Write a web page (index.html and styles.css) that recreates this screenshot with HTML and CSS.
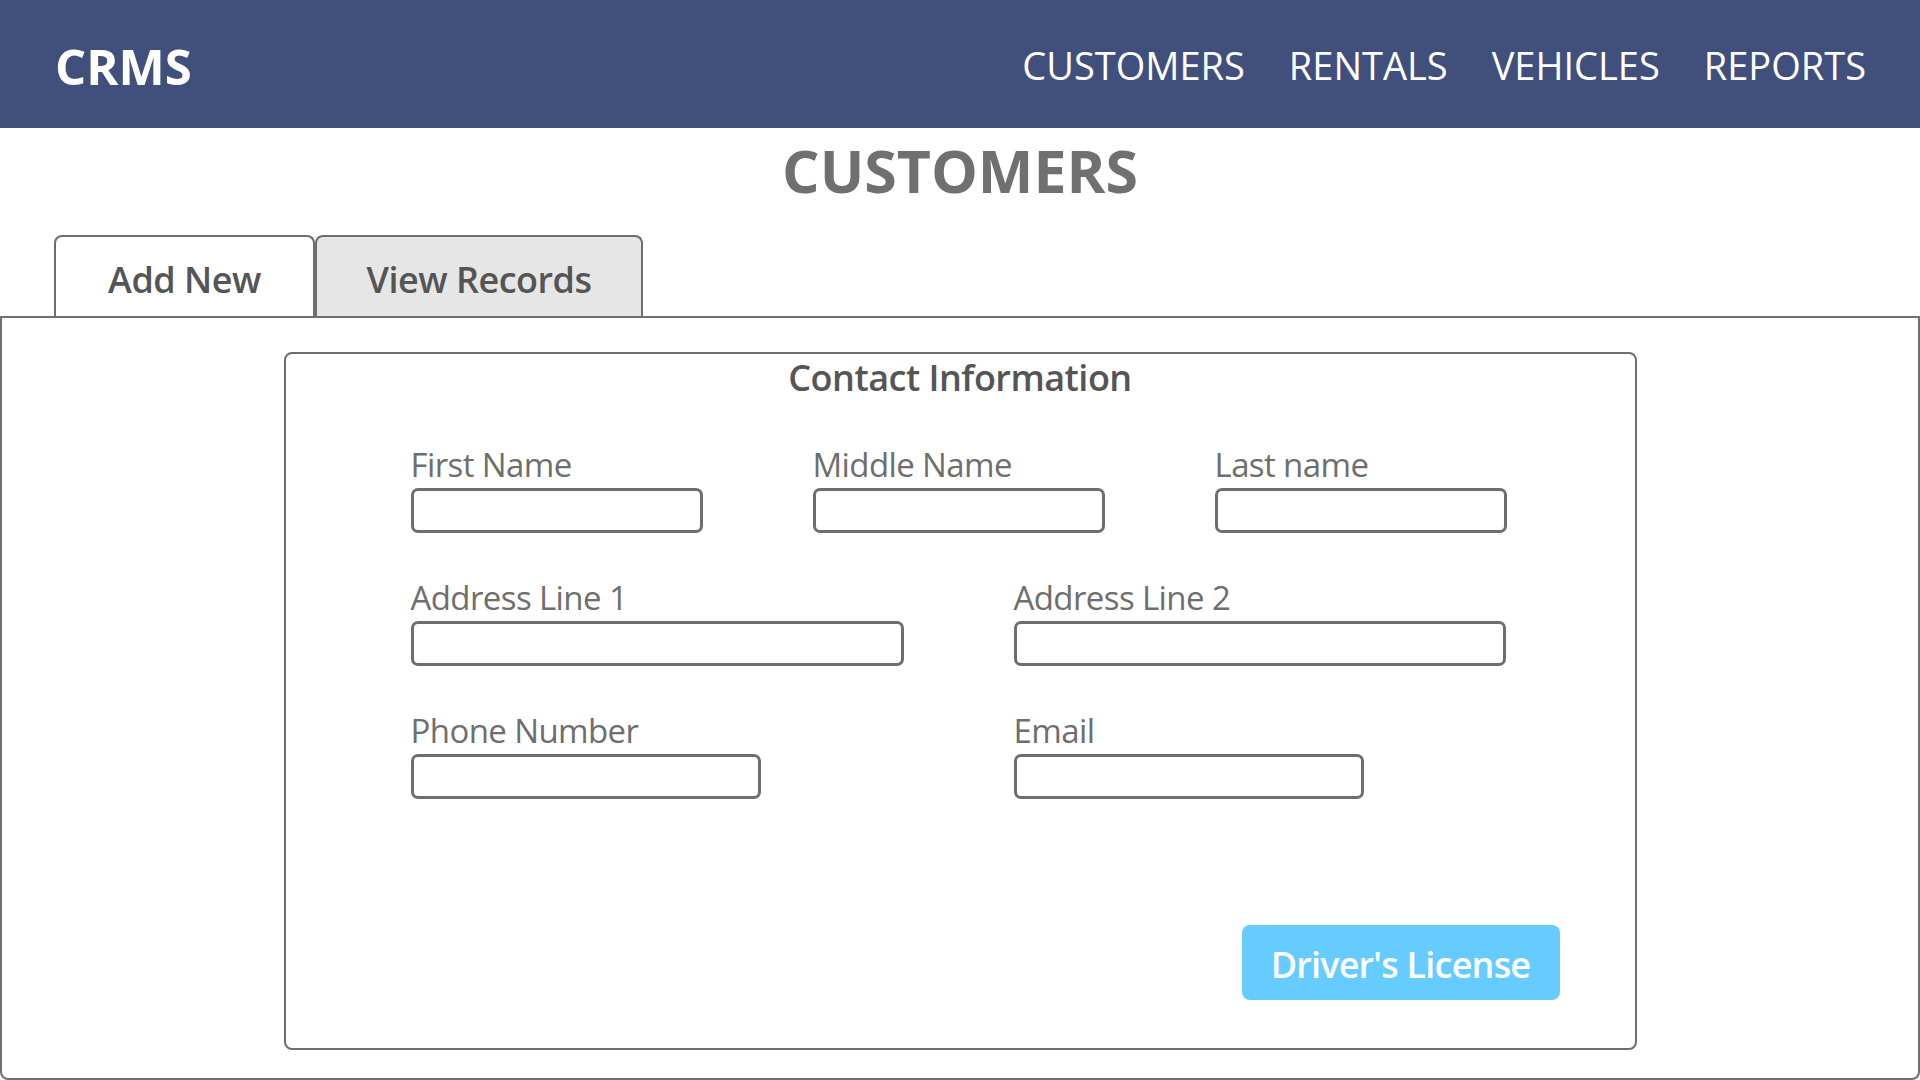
FILE: index.html
```html
<!DOCTYPE html>
<html lang="en">
<head>
<meta charset="utf-8">
<title>CRMS - Customers</title>
<link rel="stylesheet" href="styles.css">
</head>
<body>
<header class="topbar">
  <div class="logo">CRMS</div>
  <nav class="nav">
    <a class="nav-link">CUSTOMERS</a>
    <a class="nav-link">RENTALS</a>
    <a class="nav-link">VEHICLES</a>
    <a class="nav-link">REPORTS</a>
  </nav>
</header>
<h1 class="page-title">CUSTOMERS</h1>
<div class="tabs">
  <div class="tab tab-active">Add New</div>
  <div class="tab tab-inactive">View Records</div>
</div>
<main class="panel">
  <section class="fieldset">
    <h2 class="legend">Contact Information</h2>
    <div class="row row-three">
      <div class="field"><label class="label">First Name</label><div class="input"></div></div>
      <div class="field"><label class="label">Middle Name</label><div class="input"></div></div>
      <div class="field"><label class="label">Last name</label><div class="input"></div></div>
    </div>
    <div class="row row-two">
      <div class="field"><label class="label">Address Line 1</label><div class="input"></div></div>
      <div class="field"><label class="label">Address Line 2</label><div class="input"></div></div>
    </div>
    <div class="row row-two">
      <div class="field"><label class="label">Phone Number</label><div class="input input-short"></div></div>
      <div class="field"><label class="label">Email</label><div class="input input-short"></div></div>
    </div>
    <button class="btn-license">Driver's License</button>
  </section>
</main>
</body>
</html>
```
FILE: styles.css
```css
html, body {
  margin: 0;
  padding: 0;
}
body {
  width: 1920px;
  height: 1080px;
  overflow: hidden;
  background: #ffffff;
  font-family: "Open Sans", "Noto Sans", sans-serif;
  display: flex;
  flex-direction: column;
}
.topbar {
  height: 128px;
  box-sizing: border-box;
  background: #404f7b;
  display: flex;
  align-items: center;
  justify-content: space-between;
  padding: 4px 54px 0 55px;
  flex: none;
}
.logo {
  color: #ffffff;
  font-weight: 700;
  font-size: 49px;
  line-height: 1.2;
}
.nav {
  display: flex;
  gap: 44px;
}
.nav-link {
  color: #ffffff;
  font-size: 38px;
  line-height: 1.2;
  font-weight: 400;
}
.page-title {
  margin: 7px 0 0 0;
  text-align: center;
  color: #707070;
  font-weight: 700;
  font-size: 59px;
  line-height: 71px;
  flex: none;
}
.tabs {
  display: flex;
  margin: 29px 0 0 54px;
  flex: none;
  height: 81px;
}
.tab {
  box-sizing: border-box;
  height: 81px;
  border: 2px solid #6e6e6e;
  border-bottom: none;
  border-radius: 8px 8px 0 0;
  color: #555555;
  font-weight: 600;
  font-size: 36px;
  letter-spacing: -0.5px;
  display: flex;
  justify-content: center;
  padding-top: 18px;
}
.tab-active {
  width: 261px;
  background: #ffffff;
}
.tab-inactive {
  width: 328px;
  background: #e6e6e6;
}
.panel {
  flex: 1;
  box-sizing: border-box;
  border: 2px solid #707070;
  border-radius: 0 0 8px 8px;
  padding-top: 34px;
  padding-bottom: 28px;
  display: flex;
  flex-direction: column;
}
.fieldset {
  box-sizing: border-box;
  width: 1353px;
  flex: 1;
  margin: 0 auto;
  border: 2px solid #6e6e6e;
  border-radius: 8px;
  padding: 2px 0 0 125px;
  display: flex;
  flex-direction: column;
}
.legend {
  margin: 0 0 46px -125px;
  text-align: center;
  color: #555555;
  font-weight: 600;
  font-size: 36px;
  line-height: 43px;
  letter-spacing: -0.5px;
}
.row {
  display: grid;
  margin-bottom: 45px;
}
.row-three {
  grid-template-columns: 292px 292px 292px;
  column-gap: 110px;
}
.row-two {
  grid-template-columns: 493px 492px;
  column-gap: 110px;
}
.field {
  display: flex;
  flex-direction: column;
}
.label {
  color: #6e6e6e;
  font-size: 33px;
  line-height: 40px;
  letter-spacing: -0.6px;
  margin-bottom: 3px;
}
.input {
  box-sizing: border-box;
  height: 45px;
  border: 3px solid #6e6e6e;
  border-radius: 7px;
  background: #ffffff;
}
.input-short {
  width: 350px;
}
.btn-license {
  margin: auto 75px 48px auto;
  width: 318px;
  height: 75px;
  border: none;
  border-radius: 8px;
  background: #66ccff;
  color: #ffffff;
  font-family: "Open Sans", "Noto Sans", sans-serif;
  font-weight: 600;
  font-size: 36px;
  letter-spacing: -0.8px;
  padding: 4px 0 0 0;
}
```
